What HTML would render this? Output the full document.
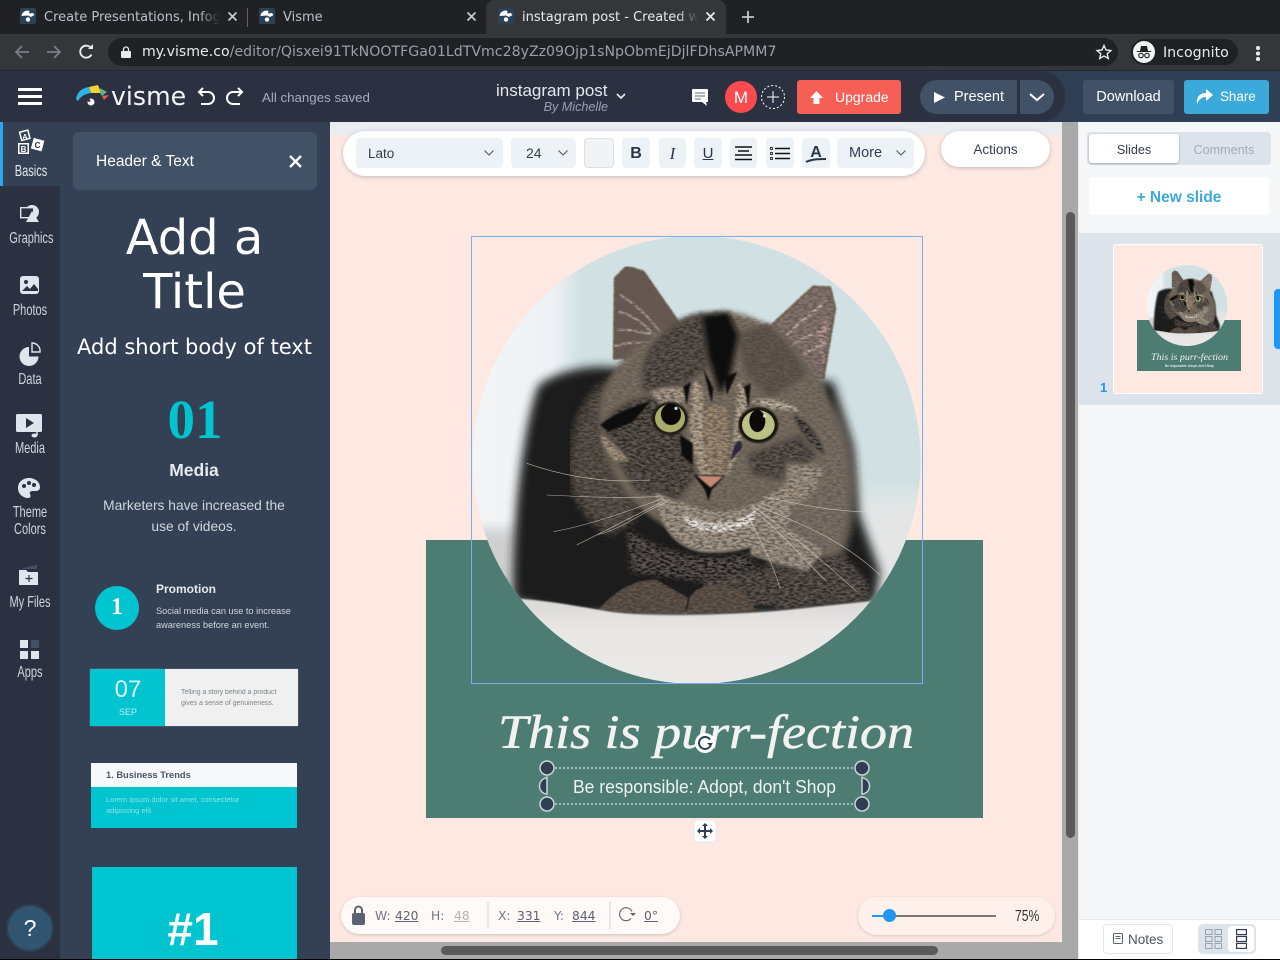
<!DOCTYPE html>
<html><head><meta charset="utf-8"><title>instagram post</title>
<style>
html,body{margin:0;padding:0;width:1280px;height:960px;overflow:hidden;background:#000}
*{box-sizing:border-box}
.b{position:absolute}
.t{position:absolute;white-space:nowrap;line-height:1;font-family:"Liberation Sans",sans-serif}
.d{font-family:"DejaVu Sans",sans-serif}
.c{transform:translateX(-50%)}
.lab{position:absolute;left:0;width:60px;text-align:center;color:#cfd6de;font:16px/17px "Liberation Sans",sans-serif;transform:scaleX(.69)}
.ctl{position:absolute;top:138px;height:30px;background:#edf2f6;border-radius:4px}
svg{position:absolute;overflow:visible}
</style></head>
<body>
<svg width="0" height="0" style="left:0;top:0">
<defs>
<symbol id="fav" viewBox="0 0 16 16"><rect width="16" height="16" rx="2" fill="#2b4155"/><path d="M1.500 8C2 4.500 4.500 2.500 8 2.500L9.500 3 9 5.500 13 5 14.500 7 11 9 8 7.500C5.500 7.500 3.500 8 1.500 8Z" fill="#fff"/><circle cx="8" cy="11.500" r="2.200" fill="#fff"/></symbol>
<filter id="fur" x="0" y="0" width="100%" height="100%"><feTurbulence type="fractalNoise" baseFrequency=".07 .16" numOctaves="3" seed="7"/><feColorMatrix values="0 0 0 0 .12 0 0 0 0 .1 0 0 0 0 .09 2.600 0 0 0 -.85"/><feComposite in2="SourceAlpha" operator="in" result="n"/><feMerge><feMergeNode in="SourceGraphic"/><feMergeNode in="n"/></feMerge></filter>
<filter id="b20"><feGaussianBlur stdDeviation="20"/></filter>
<filter id="b14" x="-10%" y="-10%" width="120%" height="120%"><feGaussianBlur stdDeviation="14"/></filter>
<filter id="b8" x="-15%" y="-15%" width="130%" height="130%"><feGaussianBlur stdDeviation="8"/></filter>
<filter id="b4" x="-15%" y="-15%" width="130%" height="130%"><feGaussianBlur stdDeviation="4"/></filter>
<filter id="b2" x="-10%" y="-10%" width="120%" height="120%"><feGaussianBlur stdDeviation="2"/></filter>
<filter id="b30" x="-30%" width="160%"><feGaussianBlur stdDeviation="32"/></filter>
<clipPath id="cc"><circle cx="680" cy="675" r="672"/></clipPath>
<linearGradient id="wl" x1="0" x2="1" y1="0" y2="0"><stop offset="0" stop-color="#f3f5f7"/><stop offset=".75" stop-color="#eef2f5"/><stop offset="1" stop-color="#d1e1e3"/></linearGradient>
<linearGradient id="carp" x1="0" x2="0" y1="0" y2="1"><stop offset="0" stop-color="#d9d6d5"/><stop offset=".4" stop-color="#e9e7e6"/><stop offset="1" stop-color="#ebe9e8"/></linearGradient>
<symbol id="cat" viewBox="0 0 1380 1350">
<g clip-path="url(#cc)">
<rect width="1380" height="1350" fill="#d1e1e3"/>
<rect x="0" y="0" width="330" height="1000" fill="url(#wl)"/>
<rect x="1160" y="780" width="220" height="300" fill="#e4e6e6" filter="url(#b30)"/>
<rect x="0" y="880" width="150" height="220" fill="#cfcfd0" filter="url(#b20)"/>
<path d="M130 1095C125 900 150 600 205 450 260 410 340 395 400 395L1090 440 1150 640 1165 830 1230 1010 1215 1100 900 1140H300Z" fill="#1e1d1d" filter="url(#b14)"/>
<g filter="url(#fur)">
<path d="M300 700C300 560 350 470 420 430L500 850 420 900C340 850 300 780 300 700Z" fill="#3e382f" filter="url(#b14)"/>
<path d="M980 440C1080 470 1130 560 1145 680 1155 800 1150 900 1090 1010L900 1000 950 700Z" fill="#7d7265" filter="url(#b14)"/>
<path d="M860 1000C960 980 1050 960 1120 960L1200 1050 1195 1100 920 1125Z" fill="#2e2a26" filter="url(#b8)"/>
<path d="M432 370L435 130 470 95 520 110 652 300 560 370Z" fill="#6a5750" stroke="#6b5a42" stroke-width="6" filter="url(#b2)"/>
<path d="M860 312L1030 155 1080 158 1095 220 1060 430 950 420Z" fill="#8a7670" stroke="#6f5f46" stroke-width="6" filter="url(#b2)"/>
<g fill="none" stroke="#e2d6d0" stroke-width="6" opacity=".75" filter="url(#b2)"><path d="M450 180C490 200 530 240 570 290M445 230C490 240 530 270 570 320M440 285C490 280 530 300 590 300M430 335C470 320 520 320 560 330M1070 200C1030 230 990 260 950 300M1080 280C1030 290 980 320 950 340M1080 320C1040 330 1000 360 980 370"/></g>
<path d="M1040 290L1075 240 1060 400Z" fill="#c59c9c" filter="url(#b4)" opacity=".7"/>
<path d="M395 480C450 340 600 240 760 230 890 240 1000 340 1060 450 1110 620 1050 790 900 880 760 950 610 910 490 800 410 710 370 580 395 480Z" fill="#7a6f5f" filter="url(#b8)"/>
<path d="M400 570C440 500 500 490 560 480L640 600 680 720 620 800 500 770 430 660Z" fill="#2e2a23" filter="url(#b8)"/>
<path d="M390 600C420 610 450 640 480 680L440 680C410 660 395 630 390 600Z" fill="#a8967c" filter="url(#b4)"/>
<path d="M830 660L990 600 1040 660 960 740 850 720Z" fill="#38322a" filter="url(#b8)"/>
<path d="M950 680C1000 690 1050 690 1060 700 1050 760 1000 810 940 820Z" fill="#a89b88" filter="url(#b8)"/>
<path d="M970 540C1020 560 1050 610 1065 660 1020 630 990 590 970 540Z" fill="#1c1a18" filter="url(#b4)"/>
<path d="M540 340C600 260 660 240 700 235L710 400 640 450 520 470C510 420 520 370 540 340Z" fill="#37322b" filter="url(#b8)"/>
<path d="M800 300L890 265C950 320 990 370 1010 420L900 490 830 420Z" fill="#54493e" filter="url(#b8)"/>
<path d="M540 470C590 450 630 450 650 470L640 510 570 510Z" fill="#b0a08c" filter="url(#b4)"/>
<path d="M840 500C890 480 950 490 990 530L900 520Z" fill="#c0b19d" filter="url(#b4)"/>
<path d="M665 450C680 430 690 440 700 480L700 620 725 715H770L790 610 805 430 835 480 810 640 775 720 690 720 660 610Z" fill="#b8a78f" filter="url(#b4)"/>
<path d="M700 520L730 510 770 520 780 640 760 710H715L700 620Z" fill="#a38b70" filter="url(#b4)"/>
<path d="M555 770C630 800 700 830 760 830 840 820 890 790 945 750L965 850C900 940 780 960 690 950 600 930 565 860 555 770Z" fill="#a89c8b" filter="url(#b4)"/>
<path d="M640 838C700 870 790 880 860 820L850 865C780 900 700 895 650 875Z" fill="#ece8df" filter="url(#b4)"/>
<path d="M860 830C950 880 1000 900 1060 950L1010 1010 840 960Z" fill="#a49888" filter="url(#b4)"/>
<path d="M470 880C560 940 680 990 830 955L870 1000 700 1040 480 1010Z" fill="#161514" filter="url(#b8)"/>
<path d="M700 1040C760 1020 830 1000 950 1010L930 1110 700 1110Z" fill="#2f2b26" filter="url(#b4)"/>
<path d="M560 1035C480 1030 420 1085 380 1130L640 1138 655 1090ZM660 1085C690 1040 790 1035 830 1085L860 1130 650 1138Z" fill="#4d4132" filter="url(#b2)"/>
</g>
<path d="M695 240L775 232 805 300 780 425 750 480 715 370Z" fill="#0c0a09" filter="url(#b8)"/>
<g fill="#0e0c0b" filter="url(#b2)"><path d="M640 455L662 440 650 510Z"/><path d="M822 455L842 445 836 520Z"/><path d="M700 400L730 460 725 505Z"/><path d="M765 425L802 410 770 480Z"/><path d="M630 600L668 625 668 690 635 660Z"/><path d="M390 570C440 530 500 510 540 500L490 560 415 590Z"/></g>
<path d="M790 640C800 610 820 610 815 640L780 680Z" fill="#29263a" filter="url(#b2)"/>
<ellipse cx="600" cy="550" rx="54" ry="50" fill="#1d1a15" filter="url(#b2)"/><ellipse cx="600" cy="550" rx="45" ry="42" fill="#a9ab6a"/><ellipse cx="603" cy="538" rx="30" ry="32" fill="#0b0a09"/><circle cx="618" cy="520" r="5" fill="#d5d9dc"/>
<ellipse cx="865" cy="570" rx="60" ry="54" fill="#15130f" filter="url(#b2)"/><ellipse cx="865" cy="570" rx="49" ry="44" fill="#bcc084"/><ellipse cx="862" cy="558" rx="24" ry="33" fill="#0b0a09"/><circle cx="884" cy="543" r="5" fill="#d5d9dc"/>
<path d="M672 720L765 722 725 765 715 798 705 765Z" fill="#0f0d0c" filter="url(#b2)"/><path d="M680 722L760 724 722 758Z" fill="#c58a76" filter="url(#b2)"/>
<path d="M0 1100C100 1070 300 1110 420 1130S800 1140 950 1125L1380 1080V1350H0Z" fill="url(#carp)" filter="url(#b2)"/>
<g fill="none" stroke="#e7e0d5" stroke-width="1.800" opacity=".75"><path d="M580 790C470 830 360 870 250 890M585 795C500 840 400 890 320 930M590 800C520 830 460 880 380 900M540 735C420 745 300 730 170 685M560 785C440 790 330 785 230 780M860 810C970 860 1100 900 1230 1020M850 815C940 880 1040 960 1160 1070M845 820C920 880 990 960 1070 1040M830 840C870 910 910 990 930 1060M880 785C1000 810 1110 840 1320 830"/></g>
</g>
</symbol>
</defs>
</svg>

<!-- Browser tab strip -->
<div class="b" style="left:0;top:0;width:1280px;height:34px;background:#202124"></div>
<div class="b" style="left:486px;top:0;width:240px;height:34px;background:#35363a;border-radius:8px 8px 0 0"></div>
<div class="b" style="left:247px;top:8px;width:1px;height:19px;background:#5f6368"></div>
<svg style="left:20px;top:8px" width="16" height="16"><use href="#fav" width="16" height="16"/></svg>
<svg style="left:259px;top:8px" width="16" height="16"><use href="#fav" width="16" height="16"/></svg>
<svg style="left:498px;top:8px" width="16" height="16"><use href="#fav" width="16" height="16"/></svg>
<div class="t d" style="left:44px;top:10px;width:175px;overflow:hidden;font-size:13px;line-height:16px;color:#bdc1c6">Create Presentations, Infographics</div>
<div class="b" style="left:199px;top:6px;width:21px;height:22px;background:linear-gradient(90deg,rgba(32,33,36,0),#202124)"></div>
<div class="t d" style="left:283px;top:10px;font-size:13px;line-height:16px;color:#bdc1c6">Visme</div>
<div class="t d" style="left:522px;top:10px;width:175px;overflow:hidden;font-size:13px;line-height:16px;color:#e8eaed">instagram post - Created with</div>
<div class="b" style="left:677px;top:6px;width:21px;height:22px;background:linear-gradient(90deg,rgba(53,54,58,0),#35363a)"></div>
<svg style="left:228px;top:12px" width="9" height="9"><path d="M.5.5l8 8M8.500.5l-8 8" stroke="#c4c7cb" stroke-width="1.800"/></svg>
<svg style="left:467px;top:12px" width="9" height="9"><path d="M.5.5l8 8M8.500.5l-8 8" stroke="#c4c7cb" stroke-width="1.800"/></svg>
<svg style="left:706px;top:12px" width="9" height="9"><path d="M.5.5l8 8M8.500.5l-8 8" stroke="#e8eaed" stroke-width="1.800"/></svg>
<svg style="left:742px;top:11px" width="12" height="12"><path d="M6 0v12M0 6h12" stroke="#c4c7cb" stroke-width="1.800"/></svg>

<!-- Browser toolbar -->
<div class="b" style="left:0;top:34px;width:1280px;height:37px;background:#35363a;border-bottom:1px solid #27282b"></div>
<svg style="left:14px;top:44px" width="16" height="16"><path d="M15 8H2M8 2L2 8l6 6" fill="none" stroke="#7b7e82" stroke-width="1.800"/></svg>
<svg style="left:46px;top:44px" width="16" height="16"><path d="M1 8h13M8 2l6 6-6 6" fill="none" stroke="#7b7e82" stroke-width="1.800"/></svg>
<svg style="left:79px;top:44px" width="15" height="15"><path d="M12.500 10.500A6 6 0 1 1 12 4" fill="none" stroke="#e8eaed" stroke-width="1.900"/><path d="M9 5h5V0z" fill="#e8eaed"/></svg>
<div class="b" style="left:108px;top:38px;width:1010px;height:28px;background:#202124;border-radius:14px"></div>
<svg style="left:121px;top:46px" width="10" height="12"><path d="M2.500 5V3.500a2.500 2.500 0 0 1 5 0V5" fill="none" stroke="#e8eaed" stroke-width="1.300"/><rect y="5" width="10" height="7" rx="1" fill="#e8eaed"/></svg>
<div class="t d" style="left:142px;top:44px;font-size:14.150px;line-height:17px;color:#9aa0a6"><span style="color:#e8eaed">my.visme.co</span>/editor/Qisxei91TkNOOTFGa01LdTVmc28yZz09Ojp1sNpObmEjDjlFDhsAPMM7</div>
<svg style="left:1096px;top:44px" width="16" height="16"><path d="M8 1.500l2 4.500 4.900.5-3.700 3.200 1.100 4.800L8 12l-4.300 2.500 1.100-4.800L1.100 6.500 6 6z" fill="none" stroke="#e8eaed" stroke-width="1.400"/></svg>
<div class="b" style="left:1131px;top:39px;width:107px;height:26px;background:#202124;border-radius:13px"></div>
<div class="b" style="left:1133px;top:41px;width:22px;height:22px;border-radius:50%;background:#f1f3f4"></div>
<svg style="left:1137px;top:45px" width="14" height="14"><path d="M0 6h14v1H0zM3 6l1-5h6l1 5z" fill="#202124"/><circle cx="4" cy="10.500" r="2.200" fill="none" stroke="#202124" stroke-width="1.200"/><circle cx="10" cy="10.500" r="2.200" fill="none" stroke="#202124" stroke-width="1.200"/></svg>
<div class="t d" style="left:1163px;top:44px;font-size:14.200px;line-height:18px;color:#e8eaed">Incognito</div>
<div class="b" style="left:1256px;top:46px;width:3.500px;height:3.500px;border-radius:50%;background:#e8eaed;box-shadow:0 5.500px 0 #e8eaed,0 11px 0 #e8eaed"></div>

<!-- App header -->
<div class="b" style="left:0;top:71px;width:1280px;height:51px;background:linear-gradient(90deg,#2c3142 72%,#2f3f54 84%)"></div>
<div class="b" style="left:18px;top:88px;width:24px;height:3px;background:#fff;box-shadow:0 7px 0 #fff,0 14px 0 #fff"></div>
<svg style="left:76px;top:84px" width="36" height="24" viewBox="0 0 36 24"><path d="M0 15C1 8 6 4 13 3L15 9C9 10 5 12 2 17Z" fill="#2cb3e4"/><path d="M13 3L22 1 25 9 15 9Z" fill="#fad02e"/><path d="M24 4L31 8 26 12 24 9Z" fill="#5db583"/><path d="M26 12L33 11 28 16Z" fill="#ec5a4e"/><circle cx="15" cy="18" r="3.500" fill="#fff"/><circle cx="13" cy="16.500" r="1.400" fill="#2c3142"/></svg>
<div class="t d" style="left:111px;top:83px;font-size:26px;line-height:28px;color:#f4f5f7;transform-origin:0 0;transform:scaleX(.97)">visme</div>
<svg style="left:197px;top:88px" width="20" height="18"><path d="M2 4H11A6 6 0 0 1 11 16H4M6 0L2 4l4 4" fill="none" stroke="#fff" stroke-width="2"/></svg>
<svg style="left:224px;top:88px" width="20" height="18"><path d="M18 4H9A6 6 0 0 0 9 16H16M14 0l4 4-4 4" fill="none" stroke="#fff" stroke-width="2"/></svg>
<div class="t" style="left:262px;top:90px;font-size:13.300px;line-height:16px;color:#a5adb9">All changes saved</div>
<div class="t" style="left:496px;top:82px;font-size:17px;line-height:18px;color:#e4e8ee">instagram post</div>
<div class="t" style="left:608px;top:100px;transform:translateX(-100%);font-size:12.600px;line-height:15px;font-style:italic;color:#98a2b0">By Michelle</div>
<svg style="left:616px;top:93px" width="10" height="7"><path d="M1 1l4 4 4-4" fill="none" stroke="#e4e8ee" stroke-width="1.700"/></svg>
<svg style="left:692px;top:89px" width="16" height="18"><path d="M1 0h14a1 1 0 0 1 1 1v12h-2l1 4-5-4H1a1 1 0 0 1-1-1V1a1 1 0 0 1 1-1z" fill="#fff"/><path d="M3 4h10M3 7h10M3 10h6" stroke="#7e8795" stroke-width="1.200"/></svg>
<div class="t" style="left:725px;top:81px;width:32px;height:32px;border-radius:50%;background:#fb4b4e;color:#fff;text-align:center;font-size:17px;line-height:33px">M</div>
<svg style="left:761px;top:85px" width="24" height="24"><circle cx="12" cy="12" r="11.500" fill="none" stroke="#fff" stroke-dasharray="2 2"/><path d="M12 6v12M6 12h12" stroke="#fff"/></svg>
<div class="b" style="left:797px;top:80px;width:104px;height:34px;border-radius:3px;background:#f55f55"></div>
<svg style="left:810px;top:91px" width="13" height="13"><path d="M6.500 0L13 7H9.500v6h-6V7H0z" fill="#fff"/></svg>
<div class="t" style="left:835px;top:89px;font-size:14px;line-height:17px;color:#fff">Upgrade</div>
<div class="b" style="left:940px;top:71px;width:125px;height:51px;border-radius:0 25px 25px 0;background:#2c3142"></div>
<div class="b" style="left:920px;top:80px;width:97px;height:34px;border-radius:17px 0 0 17px;background:#415266"></div>
<div class="b" style="left:1020px;top:80px;width:34px;height:34px;border-radius:0 17px 17px 0;background:#415266"></div>
<svg style="left:934px;top:92px" width="11" height="11"><path d="M0 0l11 5.500L0 11z" fill="#fff"/></svg>
<div class="t" style="left:954px;top:89px;font-size:14.500px;line-height:17px;color:#fff">Present</div>
<svg style="left:1029px;top:93px" width="16" height="9"><path d="M1 1l7 6 7-6" fill="none" stroke="#fff" stroke-width="2"/></svg>
<div class="t" style="left:1083px;top:80px;width:91px;height:34px;border-radius:3px;background:#415266;color:#fff;text-align:center;font-size:14.500px;line-height:35px">Download</div>
<div class="b" style="left:1184px;top:80px;width:85px;height:34px;border-radius:3px;background:#3ba9d9"></div>
<svg style="left:1196px;top:89px" width="17" height="15"><path d="M10 0l7 6-7 6V8C6 8 3 10 1 15 0 8 4 4 10 4z" fill="#fff"/></svg>
<div class="t" style="left:1220px;top:88px;font-size:13.400px;line-height:17px;color:#fff">Share</div>

<!-- Left rail -->
<div class="b" style="left:0;top:122px;width:60px;height:838px;background:#2c3142"></div>
<div class="b" style="left:0;top:122px;width:60px;height:64px;background:#344154"></div>
<div class="b" style="left:0;top:122px;width:3px;height:64px;background:#2aa8f2"></div>
<svg style="left:17px;top:128px" width="28" height="28" viewBox="0 0 28 28"><g transform="rotate(-15 9 8)"><rect x="3" y="2" width="10" height="10" fill="#fff"/><rect x="4.500" y="3.500" width="7" height="7" fill="#344154"/></g><rect x="1" y="15" width="11" height="11" fill="#fff"/><rect x="2.500" y="16.500" width="8" height="8" fill="#344154"/><g transform="rotate(15 20 17)"><rect x="15" y="11" width="11" height="11" fill="#fff"/></g><text x="8" y="11" font-family="Liberation Sans" font-size="7" font-weight="700" fill="#fff" text-anchor="middle">A</text><text x="6.500" y="24" font-family="Liberation Sans" font-size="8" font-weight="700" fill="#fff" text-anchor="middle">B</text><text x="20.500" y="20" font-family="Liberation Sans" font-size="8" font-weight="700" fill="#2c3142" text-anchor="middle">C</text></svg>
<div class="lab" style="top:163px;left:1px;color:#e4e8ee">Basics</div>
<svg style="left:20px;top:204px" width="22" height="20"><circle cx="12" cy="8" r="7" fill="#dfe5ec"/><rect x=".7" y="3.700" width="13" height="10" fill="#2c3142" stroke="#dfe5ec" stroke-width="1.400"/><path d="M12 7l7 11H6z" fill="#dfe5ec"/></svg>
<div class="lab" style="top:230px">Graphics</div>
<svg style="left:20px;top:276px" width="20" height="19"><rect width="19" height="18" rx="3" fill="#dfe5ec"/><circle cx="6" cy="6" r="2" fill="#2c3142"/><path d="M2 15l5-5 3 3 4-5 4 5v2H2z" fill="#2c3142"/></svg>
<div class="lab" style="top:302px">Photos</div>
<svg style="left:19px;top:342px" width="22" height="24"><path d="M10 5a9.500 9.500 0 1 0 9.500 9.500H10z" fill="#dfe5ec"/><path d="M13 1a8 8 0 0 1 8 9h-8z" fill="none" stroke="#dfe5ec" stroke-width="1.400"/></svg>
<div class="lab" style="top:371px">Data</div>
<svg style="left:16px;top:414px" width="27" height="24"><rect width="26" height="18" rx="1.500" fill="#dfe5ec"/><path d="M10 4l8 5-8 5z" fill="#2c3142"/><path d="M21 9v12" stroke="#dfe5ec" stroke-width="1.500"/><ellipse cx="18.500" cy="21.500" rx="3" ry="2" fill="#dfe5ec"/></svg>
<div class="lab" style="top:440px">Media</div>
<svg style="left:18px;top:478px" width="22" height="20"><path d="M11 0C5 0 0 4 0 10s5 10 10 10c3 0 3-2 2-4s1-3 3-3h3c3 0 4-2 4-4 0-5-5-9-11-9z" fill="#dfe5ec"/><circle cx="6" cy="8" r="2" fill="#2c3142"/><circle cx="11" cy="5" r="2" fill="#2c3142"/><circle cx="16" cy="7" r="2" fill="#2c3142"/></svg>
<div class="lab" style="top:504px">Theme<br>Colors</div>
<svg style="left:18px;top:563px" width="23" height="23"><path d="M5 5l14-3v4H5z" fill="#415266"/><path d="M1 7h7l2 2h10v13H1z" fill="#dfe5ec"/><path d="M11 12v7M7.500 15.500h7" stroke="#2c3142" stroke-width="1.200"/></svg>
<div class="lab" style="top:594px">My Files</div>
<svg style="left:20px;top:640px" width="20" height="20"><rect width="8" height="8" fill="#dfe5ec"/><rect x="11" width="8" height="8" fill="#415266"/><rect y="11" width="8" height="8" fill="#dfe5ec"/><rect x="11" y="11" width="8" height="8" fill="#dfe5ec"/></svg>
<div class="lab" style="top:664px">Apps</div>
<div class="t" style="left:6px;top:904px;width:48px;height:48px;border-radius:50%;background:#2f5570;border:2px solid #2e3d50;color:#fff;text-align:center;font-size:23px;line-height:44px">?</div>

<!-- Left panel -->
<div class="b" style="left:60px;top:122px;width:270px;height:838px;background:#344154"></div>
<div class="b" style="left:73px;top:132px;width:244px;height:58px;border-radius:6px;background:#415266"></div>
<div class="t" style="left:96px;top:153px;font-size:15.500px;line-height:18px;color:#fff">Header &amp; Text</div>
<svg style="left:289px;top:155px" width="13" height="13"><path d="M1 1l11 11M12 1L1 12" stroke="#fff" stroke-width="2.400"/></svg>
<div class="t d c" style="left:194.500px;top:210px;font-size:48px;line-height:56px;color:#fff;white-space:nowrap">Add a</div>
<div class="t d c" style="left:194.500px;top:264px;font-size:48px;line-height:56px;color:#fff">Title</div>
<div class="t d c" style="left:194.500px;top:334px;font-size:21px;line-height:26px;color:#fff">Add short body of text</div>
<div class="t c" style="left:195px;top:390px;font-family:'Liberation Serif',serif;font-weight:700;font-size:55px;line-height:60px;color:#00c4d0">01</div>
<div class="t c" style="left:194px;top:460px;font-size:17.500px;line-height:20px;font-weight:700;color:#e6e9ed">Media</div>
<div class="t" style="left:60px;width:268px;top:495px;text-align:center;font-size:13.800px;line-height:21px;color:#cfd5dc">Marketers have increased the<br>use of videos.</div>
<div class="t" style="left:95px;top:586px;width:44px;height:44px;border-radius:50%;background:#00c4d0;color:#fff;text-align:center;font-family:'Liberation Serif',serif;font-weight:700;font-size:24px;line-height:43px">1</div>
<div class="t" style="left:156px;top:582px;font-size:12px;line-height:14px;font-weight:700;color:#e6e9ed">Promotion</div>
<div class="t" style="left:156px;top:604px;font-size:9.200px;line-height:14px;color:#cfd5dc">Social media can use to increase<br>awareness before an event.</div>
<div class="b" style="left:90px;top:669px;width:208px;height:57px;background:#f0f0f0;box-shadow:0 0 1px #99a"></div>
<div class="b" style="left:90px;top:669px;width:75px;height:57px;background:#00c4d0"></div>
<div class="t c" style="left:128px;top:677px;font-size:24px;line-height:26px;color:#d8f6f8">07</div>
<div class="t c" style="left:128px;top:707px;font-size:9px;line-height:10px;color:#bcecef">SEP</div>
<div class="t" style="left:181px;top:688px;font-size:6.900px;line-height:10.500px;color:#7e8287;filter:blur(.3px)">Telling a story behind a product<br>gives a sense of genuineness.</div>
<div class="b" style="left:91px;top:763px;width:206px;height:65px;background:#00c4d0"></div>
<div class="b" style="left:91px;top:763px;width:206px;height:24px;background:#f6f8fb"></div>
<div class="t" style="left:106px;top:770px;font-size:9.300px;line-height:11px;font-weight:700;color:#4b5563">1. Business Trends</div>
<div class="t" style="left:106px;top:794px;font-size:7.500px;line-height:11px;color:#8fe3e9">Lorem ipsum dolor sit amet, consectetur<br>adipiscing elit.</div>
<div class="b" style="left:92px;top:867px;width:205px;height:93px;background:#00c4d0"></div>
<div class="t c" style="left:193px;top:903px;font-size:46px;line-height:52px;font-weight:700;color:#fff">#1</div>
<div class="b" style="left:0;top:959px;width:1280px;height:1px;background:#000;z-index:50"></div>

<!-- Canvas -->
<div class="b" style="left:330px;top:122px;width:732px;height:820px;background:#fee9e2"></div>
<div class="b" style="left:330px;top:122px;width:732px;height:13px;background:#e9edf0"></div>
<div class="b" style="left:426px;top:540px;width:557px;height:278px;background:#4d7c73"></div>
<svg style="left:470px;top:235px" width="460" height="450" viewBox="0 0 1380 1350"><use href="#cat" width="1380" height="1350"/></svg>
<div class="b" style="left:471px;top:236px;width:452px;height:448px;border:1px solid #7ab0f0"></div>
<svg style="left:0;top:0" width="1280" height="960">
<text x="498" y="748" font-family="Liberation Serif,serif" font-style="italic" font-size="48" fill="#f2f2f0" stroke="#f2f2f0" stroke-width=".5" textLength="416" lengthAdjust="spacingAndGlyphs">This is purr-fection</text>
<path d="M547 768H862M547 804H862" stroke="#fff" stroke-dasharray="2 2"/>
<path d="M547 768V804M862 768V804" stroke="#fff" stroke-dasharray="2 2" opacity=".7"/>
<text x="573" y="793" font-family="Liberation Sans,sans-serif" font-size="18.500" fill="#eef3f1" textLength="263" lengthAdjust="spacingAndGlyphs">Be responsible: Adopt, don't Shop</text>
<g fill="#2f3e52" stroke="#ccd3da" stroke-width="1.500"><circle cx="547" cy="768" r="7"/><circle cx="862" cy="768" r="7"/><circle cx="547" cy="804" r="7"/><circle cx="862" cy="804" r="7"/><path d="M547 778A7.500 8 0 0 0 547 794Z"/><path d="M862 778A7.500 8 0 0 1 862 794Z"/></g>
<circle cx="705" cy="743" r="10" fill="#fff"/><path d="M710 739.500A6 6 0 1 0 711 744" fill="none" stroke="#2f3e52" stroke-width="2"/><path d="M707 743h6l-3 3z" fill="#2f3e52"/>
<rect x="694" y="820" width="22" height="22" rx="4" fill="#fff" stroke="#e4e8ec"/>
<path d="M705 823l3 3h-2v4h4v-2l3 3-3 3v-2h-4v4h2l-3 3-3-3h2v-4h-4v2l-3-3 3-3v2h4v-4h-2z" fill="#2f3e52"/>
</svg>

<!-- Format toolbar -->
<div class="b" style="left:343px;top:131px;width:582px;height:45px;border-radius:23px;background:#fff;box-shadow:0 1px 4px rgba(60,70,90,.3)"></div>
<div class="ctl" style="left:356px;width:147px"></div>
<div class="t" style="left:368px;top:146px;font-size:13.500px;line-height:15px;color:#333d4d">Lato</div>
<svg style="left:484px;top:150px" width="10" height="6"><path d="M.5.500L5 5 9.500.500" fill="none" stroke="#4a5463"/></svg>
<div class="ctl" style="left:511px;width:65px"></div>
<div class="t" style="left:526px;top:146px;font-size:14px;line-height:15px;color:#333d4d">24</div>
<svg style="left:558px;top:150px" width="10" height="6"><path d="M.5.500L5 5 9.500.500" fill="none" stroke="#4a5463"/></svg>
<div class="ctl" style="left:584px;width:30px;background:#f2f3f4;border:1px solid #d8e1ea"></div>
<div class="ctl" style="left:622px;width:28px;color:#2c3545;font:700 16px/32px 'Liberation Sans',sans-serif;text-align:center">B</div>
<div class="ctl" style="left:659px;width:27px;color:#2c3545;font:italic 17px/32px 'Liberation Serif',serif;text-align:center">I</div>
<div class="ctl" style="left:694px;width:28px;color:#2c3545;font:15px/32px 'Liberation Sans',sans-serif;text-align:center;text-decoration:underline">U</div>
<div class="ctl" style="left:730px;width:27px"></div>
<svg style="left:735px;top:146px" width="17" height="15"><path d="M0 1h17M3 5h11M0 9h17M0 13.500h17" stroke="#111" stroke-width="1.500"/></svg>
<div class="ctl" style="left:766px;width:28px"></div>
<svg style="left:770px;top:147px" width="20" height="13"><path d="M5 1.500h15M5 6.500h15M5 11.500h15" stroke="#111" stroke-width="1.500"/><circle cx="1.500" cy="1.500" r="1.200" fill="none" stroke="#111" stroke-width=".8"/><circle cx="1.500" cy="6.500" r="1.200" fill="none" stroke="#111" stroke-width=".8"/><circle cx="1.500" cy="11.500" r="1.200" fill="none" stroke="#111" stroke-width=".8"/></svg>
<div class="ctl" style="left:802px;width:28px;color:#2c3545;font:700 16px/29px 'Liberation Sans',sans-serif;text-align:center">A</div>
<svg style="left:806px;top:158px" width="20" height="5"><path d="M0 4C6 1 14 1 20 1" stroke="#2c3545" stroke-width="2" fill="none"/></svg>
<div class="ctl" style="left:837px;width:77px"></div>
<div class="t" style="left:849px;top:146px;font-size:14.500px;line-height:15px;color:#333d4d">More</div>
<svg style="left:896px;top:150px" width="10" height="6"><path d="M.5.500L5 5 9.500.500" fill="none" stroke="#4a5463"/></svg>
<div class="t" style="left:941px;top:131px;width:109px;height:36px;border-radius:18px;background:#fff;box-shadow:0 1px 4px rgba(60,70,90,.3);color:#333d4d;text-align:center;font-size:13.500px;line-height:37px">Actions</div>

<!-- Bottom pills -->
<div class="b" style="left:341px;top:897px;width:339px;height:37px;border-radius:19px;background:#fffaf7;box-shadow:0 1px 3px rgba(60,70,90,.25)"></div>
<svg style="left:352px;top:905px" width="13" height="20"><path d="M3 9V5a3.500 3.500 0 0 1 7 0v4" fill="none" stroke="#5b6372" stroke-width="2"/><rect y="8" width="13" height="12" rx="2" fill="#5b6372"/></svg>
<div class="t d" style="left:375px;top:909px;font-size:12.300px;line-height:15px;color:#707784">W:</div>
<div class="t d" style="left:395px;top:909px;font-size:12.300px;line-height:15px;color:#5b6372;text-decoration:underline">420</div>
<div class="t d" style="left:431px;top:909px;font-size:12.300px;line-height:15px;color:#707784">H:</div>
<div class="t d" style="left:454px;top:909px;font-size:12.300px;line-height:15px;color:#b0b3b8;text-decoration:underline">48</div>
<div class="b" style="left:487px;top:902px;width:2px;height:27px;background:#e6e9ec"></div>
<div class="t d" style="left:498px;top:909px;font-size:12.300px;line-height:15px;color:#707784">X:</div>
<div class="t d" style="left:517px;top:909px;font-size:12.300px;line-height:15px;color:#5b6372;text-decoration:underline">331</div>
<div class="t d" style="left:554px;top:909px;font-size:12.300px;line-height:15px;color:#707784">Y:</div>
<div class="t d" style="left:572px;top:909px;font-size:12.300px;line-height:15px;color:#5b6372;text-decoration:underline">844</div>
<div class="b" style="left:609px;top:902px;width:2px;height:27px;background:#e6e9ec"></div>
<svg style="left:619px;top:907px" width="17" height="15"><path d="M12 11.500A6.500 6.500 0 1 1 13 4.500" fill="none" stroke="#5b6372" stroke-width="1.100"/><path d="M11 6h6l-3 3z" fill="#5b6372"/></svg>
<div class="t d" style="left:644px;top:909px;font-size:12.300px;line-height:15px;color:#5b6372;text-decoration:underline">0°</div>
<div class="b" style="left:858px;top:897px;width:197px;height:38px;border-radius:19px;background:#fef0ea;box-shadow:0 1px 3px rgba(60,70,90,.2)"></div>
<div class="b" style="left:872px;top:915px;width:17px;height:2px;background:#2196f3"></div>
<div class="b" style="left:895px;top:915px;width:101px;height:2px;background:#777"></div>
<div class="b" style="left:883px;top:909px;width:13px;height:13px;border-radius:50%;background:#2196f3"></div>
<div class="t" style="left:1015px;top:908px;font-size:16px;line-height:17px;color:#333;transform-origin:0 0;transform:scaleX(.76)">75%</div>

<!-- Scrollbars -->
<div class="b" style="left:1062px;top:122px;width:16px;height:838px;background:#a9a9a9"></div>
<div class="b" style="left:1066px;top:212px;width:9px;height:626px;border-radius:5px;background:#5a5a5a"></div>
<div class="b" style="left:330px;top:942px;width:748px;height:18px;background:#a9a9a9"></div>
<div class="b" style="left:441px;top:946px;width:497px;height:9px;border-radius:5px;background:#5a5a5a"></div>

<!-- Right panel -->
<div class="b" style="left:1078px;top:122px;width:202px;height:838px;background:#fff;border-left:1px solid #e8ecf0"></div>
<div class="b" style="left:1079px;top:122px;width:201px;height:797px;background:#f5f7f9"></div>
<div class="b" style="left:1087px;top:132px;width:184px;height:33px;border-radius:4px;background:#dce3ea"></div>
<div class="t" style="left:1089px;top:134px;width:90px;height:29px;border-radius:3px;background:#fff;box-shadow:0 1px 2px rgba(60,70,90,.35);color:#333d4d;text-align:center;font-size:12.600px;line-height:32px">Slides</div>
<div class="t" style="left:1179px;top:134px;width:90px;text-align:center;font-size:12.600px;line-height:32px;color:#a2aaba">Comments</div>
<div class="t" style="left:1089px;top:177px;width:180px;height:38px;border-radius:4px;background:#fff;color:#3ba9d9;text-align:center;font-size:15.500px;font-weight:700;line-height:41px">+ New slide</div>
<div class="b" style="left:1079px;top:233px;width:201px;height:172px;background:#dce3ea"></div>
<div class="b" style="left:1274px;top:289px;width:6px;height:60px;border-radius:4px 0 0 4px;background:#2196f3"></div>
<div class="t" style="left:1100px;top:381px;font-size:13px;line-height:14px;font-weight:700;color:#2196f3">1</div>
<div class="b" style="left:1113px;top:244px;width:150px;height:150px;border-radius:3px;background:#fee9e2;border:1px solid #fff"></div>
<div class="b" style="left:1137px;top:320px;width:104px;height:51px;background:#4d7c73"></div>
<svg style="left:1146px;top:264px" width="83" height="83" viewBox="0 0 1380 1350"><use href="#cat" width="1380" height="1350"/></svg>
<svg style="left:0;top:0" width="1280" height="960">
<text x="1151" y="360" font-family="Liberation Serif,serif" font-style="italic" font-size="9" fill="#f2f2f0" textLength="77" lengthAdjust="spacingAndGlyphs">This is purr-fection</text>
<text x="1165" y="367" font-family="Liberation Sans,sans-serif" font-weight="700" font-size="4" fill="#dfe9e6" textLength="49" lengthAdjust="spacingAndGlyphs">Be responsible: Adopt, don't Shop</text>
</svg>
<div class="b" style="left:1079px;top:919px;width:201px;height:1px;background:#e4e9ee"></div>
<div class="b" style="left:1103px;top:924px;width:70px;height:30px;border-radius:4px;border:1px solid #e2e7ec;background:#fff"></div>
<svg style="left:1113px;top:933px" width="10" height="11"><rect x=".5" y=".5" width="9" height="10" rx="1" fill="none" stroke="#5b6372"/><path d="M2.500 3.500h5M2.500 5.500h5" stroke="#5b6372"/></svg>
<div class="t" style="left:1128px;top:932px;font-size:13.500px;line-height:15px;color:#4b5563">Notes</div>
<div class="b" style="left:1198px;top:924px;width:58px;height:30px;border-radius:5px;background:#dce3ea"></div>
<div class="b" style="left:1228px;top:926px;width:26px;height:26px;border-radius:4px;background:#fff"></div>
<svg style="left:1205px;top:929px" width="17" height="20"><g fill="none" stroke="#98a2b2"><rect x=".5" y=".5" width="6.500" height="5"/><rect x="10" y=".5" width="6.500" height="5"/><rect x=".5" y="7.500" width="6.500" height="5"/><rect x="10" y="7.500" width="6.500" height="5"/><rect x=".5" y="14.500" width="6.500" height="5"/><rect x="10" y="14.500" width="6.500" height="5"/></g></svg>
<svg style="left:1236px;top:929px" width="11" height="20"><g fill="none" stroke="#2f3e52" stroke-width="1.200"><rect x=".6" y=".6" width="9.800" height="5"/><rect x=".6" y="7.500" width="9.800" height="5"/><rect x=".6" y="14.400" width="9.800" height="5"/></g></svg>
</body></html>
